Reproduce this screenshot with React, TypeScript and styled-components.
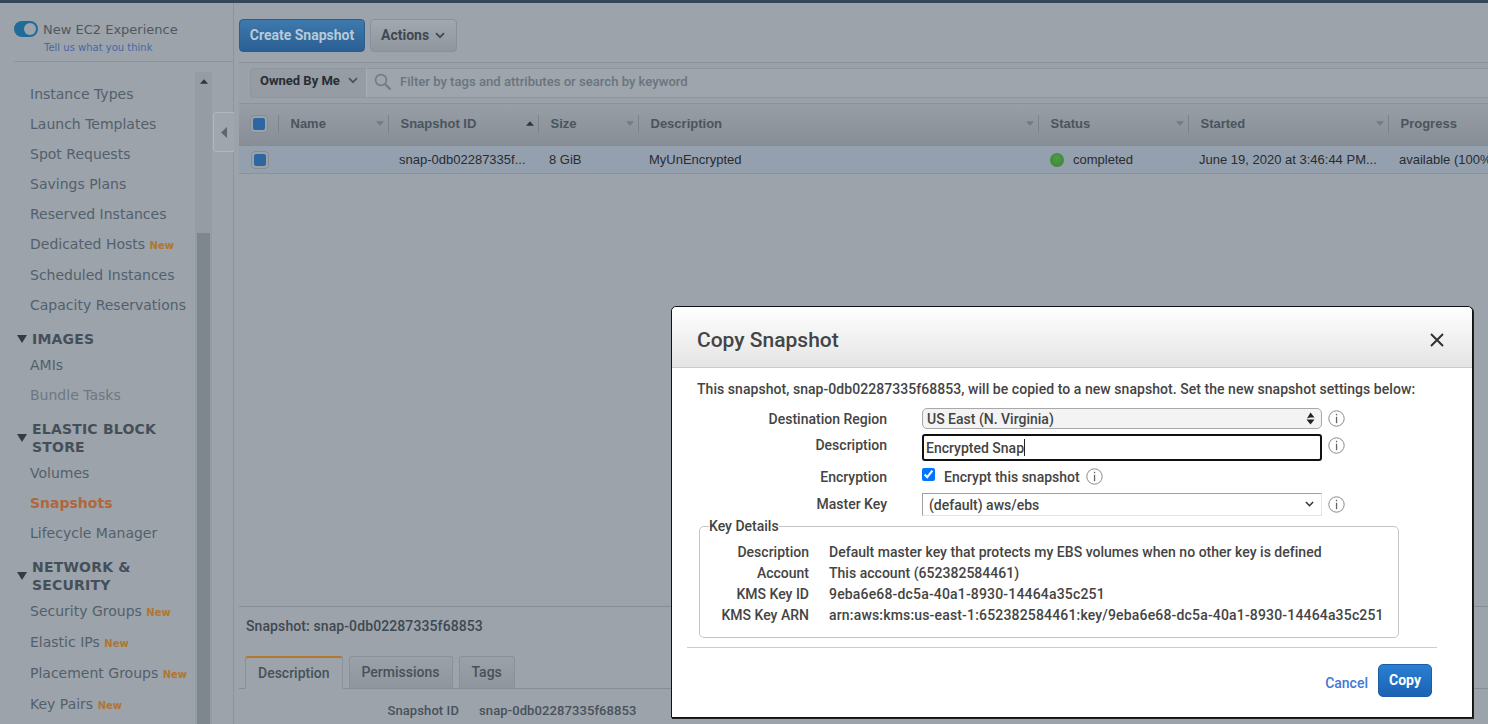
import React from 'react';
import styled, { createGlobalStyle } from 'styled-components';

const GlobalStyle = createGlobalStyle`
    html, body {
        margin: 0;
        padding: 0;
        height: 100%;
        overflow: hidden;
        background: #9ca3aa;
    }
    * {
        box-sizing: border-box;
    }
`;

const Page = styled.div`
    position: relative;
    width: 1488px;
    height: 724px;
    display: flex;
    flex-direction: column;
    overflow: hidden;
    background: #9ca3aa;
`;

const TopBar = styled.div`
    height: 3px;
    flex: none;
    background: #35465a;
`;

const Shell = styled.div`
    flex: 1;
    min-height: 0;
    display: flex;
`;

// #region sidebar
const Sidebar = styled.aside`
    position: relative;
    width: 234px;
    flex: none;
    display: flex;
    flex-direction: column;
    padding-left: 14px;
    border-right: 1px solid #8d949c;
    font-family: 'DejaVu Sans', sans-serif;
`;

const ExperienceBox = styled.div`
    height: 59px;
    flex: none;
    padding-top: 17px;
    border-bottom: 1px solid #8d949c;
`;

const ToggleRow = styled.div`
    display: flex;
    align-items: center;
    gap: 5px;
    font-size: 13px;
    color: #4e5863;
    height: 18px;
`;

const Toggle = styled.span`
    width: 24px;
    height: 16px;
    border-radius: 8px;
    background: #1f6c9b;
    display: flex;
    align-items: center;
    justify-content: flex-end;
    padding-right: 2px;

    &::after {
        content: '';
        width: 12px;
        height: 12px;
        border-radius: 50%;
        background: #9ca3aa;
    }
`;

const FeedbackLink = styled.div`
    margin: 4px 0 0 30px;
    font-size: 10px;
    color: #4a66a6;
`;

const SideBody = styled.div`
    flex: 1;
    min-height: 0;
    display: flex;
    padding-top: 10px;
`;

const Nav = styled.nav`
    width: 181px;
    flex: none;
    padding-top: 7px;
`;

const NavItem = styled.div<{ $tall?: boolean; $muted?: boolean; $active?: boolean }>`
    height: ${(props) => (props.$tall ? '31px' : '30px')};
    display: flex;
    align-items: center;
    padding-left: 16px;
    padding-bottom: ${(props) => (props.$tall ? '1px' : '0')};
    white-space: nowrap;
    font-size: 14px;
    font-weight: ${(props) => (props.$active ? 700 : 400)};
    color: ${(props) => {
        if (props.$active) return '#b0673c';
        return props.$muted ? '#6c7883' : '#53606c';
    }};
`;

const NewBadge = styled.span`
    margin: 2px 0 0 4.5px;
    font-size: 10px;
    font-weight: 700;
    color: #b0762f;
`;

const NavHeading = styled.div`
    display: flex;
    align-items: center;
    margin: 10px 0 2px;
    padding-left: 3px;
`;

const HeadingText = styled.div`
    margin-left: 5px;
    font-size: 14px;
    line-height: 18px;
    font-weight: 700;
    color: #454f5a;
    letter-spacing: 0.2px;
`;

const ScrollTrack = styled.div`
    width: 17px;
    flex: none;
    display: flex;
    flex-direction: column;
    align-items: center;
    background: #959ca3;
`;

const ScrollUp = styled.div`
    height: 161px;
    flex: none;
    display: flex;
    align-items: flex-start;
    padding-top: 7px;
`;

const ScrollThumb = styled.div`
    flex: 1;
    width: 13px;
    background: #7e868e;
`;

const CollapseTab = styled.div`
    position: absolute;
    right: -1px;
    top: 109px;
    width: 21px;
    height: 40px;
    display: flex;
    align-items: center;
    padding-left: 7px;
    background: #9fa6ad;
    border: 1px solid #b0b6bc;
    border-right: none;
    border-radius: 4px 0 0 4px;
`;
// #endregion sidebar

// #region main
const Main = styled.main`
    flex: 1;
    min-width: 0;
    display: flex;
    flex-direction: column;
    padding-left: 5px;
`;

const Toolbar = styled.div`
    height: 59px;
    flex: none;
    display: flex;
    align-items: flex-start;
    gap: 5px;
    padding-top: 16px;
    font-family: Roboto, sans-serif;
`;

const CreateButton = styled.div`
    width: 126px;
    height: 33px;
    padding-bottom: 1px;
    display: flex;
    align-items: center;
    justify-content: center;
    border-radius: 4px;
    border: 1px solid #2b5d8f;
    background: linear-gradient(#3e79ad, #2a5f94);
    color: #b7c9d8;
    font-size: 14px;
    font-weight: 700;
`;

const ActionsButton = styled.div`
    height: 33px;
    padding: 0 11px 1px 10px;
    display: flex;
    align-items: center;
    gap: 6px;
    border-radius: 4px;
    border: 1px solid #8a9199;
    background: linear-gradient(#a2a8af, #8f969e);
    color: #3f4852;
    font-size: 14px;
    font-weight: 700;
`;

const FilterBar = styled.div`
    height: 42px;
    flex: none;
    display: flex;
    align-items: stretch;
    padding: 5px 0 5px 11px;
    background: #9aa1a8;
    border-top: 1px solid #8b9299;
    border-bottom: 1px solid #8b9299;
    font-family: Roboto, sans-serif;
`;

const OwnerPicker = styled.div`
    width: 117px;
    flex: none;
    display: flex;
    align-items: center;
    justify-content: space-between;
    padding: 0 8px 5px 9px;
    border: 1px solid #8f969d;
    border-right: 1px solid #a9afb5;
    border-radius: 4px 0 0 4px;
    background: #959ca3;
    color: #262d35;
    font-size: 13px;
    font-weight: 700;
`;

const FilterField = styled.div`
    flex: 1;
    display: flex;
    align-items: center;
    gap: 8px;
    padding: 0 0 3px 7px;
    background: #9ea5ac;
    border-top: 1px solid #8f969d;
    border-bottom: 1px solid #8f969d;
    color: #6a747e;
    font-size: 13.1px;
    font-weight: 500;
`;

const COLUMNS = '40px 110px 150px 100px 400px 150px 200px 1fr';

const TableHeader = styled.div`
    height: 42px;
    flex: none;
    display: grid;
    grid-template-columns: ${COLUMNS};
    align-items: center;
    padding-bottom: 2px;
    background: linear-gradient(#979ea5, #878e95);
    border-bottom: 1px solid #858c93;
`;

const HeaderCell = styled.div<{ $last?: boolean }>`
    height: 18px;
    display: flex;
    align-items: center;
    justify-content: space-between;
    padding: 0 4px 0 11.5px;
    border-right: ${(props) => (props.$last ? 'none' : '1px solid #7c838b')};
    font-family: 'Liberation Sans', sans-serif;
    font-size: 13px;
    font-weight: 700;
    color: #4b545d;
    white-space: nowrap;
`;

const CheckCell = styled.div<{ $inRow?: boolean }>`
    height: 18px;
    display: flex;
    align-items: center;
    padding-left: ${(props) => (props.$inRow ? '12px' : '11px')};
    border-right: ${(props) => (props.$inRow ? 'none' : '1px solid #7c838b')};
`;

const FakeCheck = styled.span`
    width: 18px;
    height: 18px;
    padding: 2px;
    border-radius: 4px;
    background: #9aa1a8;
    border: 1px solid #858c94;

    &::after {
        content: '';
        display: block;
        width: 100%;
        height: 100%;
        border-radius: 2px;
        background: #2d67a2;
    }
`;

const TableRow = styled.div`
    height: 28px;
    flex: none;
    display: grid;
    grid-template-columns: ${COLUMNS};
    align-items: center;
    background: #95a0ae;
    border-bottom: 1px solid #8a9199;
`;

const RowCell = styled.div`
    padding-left: 10px;
    display: flex;
    align-items: center;
    gap: 9px;
    font-family: 'Liberation Sans', sans-serif;
    font-size: 13px;
    color: #262c33;
    white-space: nowrap;
    overflow: hidden;
`;

const StatusDot = styled.span`
    width: 14px;
    height: 14px;
    margin-left: 1px;
    border-radius: 50%;
    background: radial-gradient(circle at 50% 40%, #4f9c49, #3a8038);
`;

const Spacer = styled.div`
    flex: 1;
`;

const DetailPanel = styled.section`
    height: 118px;
    flex: none;
    border-top: 1px solid #868d94;
    padding: 10px 0 0 7px;
    font-family: Roboto, sans-serif;
`;

const DetailTitle = styled.div`
    font-size: 14px;
    line-height: 19px;
    font-weight: 500;
    letter-spacing: 0.1px;
    color: #3f4852;
`;

const Tabs = styled.div`
    margin: 19px 0 0 -7px;
    height: 34px;
    display: flex;
    align-items: flex-end;
    gap: 6px;
    padding-left: 6px;
    border-bottom: 1px solid #868d94;
`;

const Tab = styled.div<{ $active?: boolean }>`
    height: ${(props) => (props.$active ? '33px' : '32px')};
    padding: 0 12px 1px;
    display: flex;
    align-items: center;
    font-size: 14px;
    font-weight: 500;
    color: #48515b;
    border: 1px solid #8a9199;
    border-radius: 3px 3px 0 0;
    background: ${(props) => (props.$active ? '#9ca3aa' : 'linear-gradient(#9aa1a8, #8e959d)')};
    border-top: ${(props) => (props.$active ? '2px solid #b3782d' : '1px solid #8a9199')};
    border-bottom: ${(props) => (props.$active ? '1px solid #9ca3aa' : 'none')};
    margin-bottom: ${(props) => (props.$active ? '-1px' : '0')};
`;

const DetailRow = styled.div`
    margin-top: 14px;
    display: grid;
    grid-template-columns: 213px 713px 50px;
    column-gap: 20px;
    font-size: 13px;
    font-weight: 500;
    letter-spacing: 0.1px;
    color: #48515b;
`;

const DetailLabel = styled.div`
    text-align: right;
`;

const DashMark = styled.div`
    height: 11px;
    border-bottom: 1px dashed #7f868e;
`;
// #endregion main

// #region dialog
const Dialog = styled.div`
    position: absolute;
    left: 671px;
    top: 306px;
    width: 802px;
    height: 412px;
    display: flex;
    flex-direction: column;
    background: #fff;
    border: 1px solid #111;
    border-radius: 5px 5px 0 0;
    box-shadow: 1px 1px 0 #222;
    font-family: Roboto, sans-serif;
    color: #444;
`;

const DialogHeader = styled.header`
    height: 61px;
    flex: none;
    display: flex;
    align-items: center;
    justify-content: space-between;
    padding: 6px 28px 0 25px;
    border-bottom: 1px solid #ccc;
    border-radius: 5px 5px 0 0;
    background: linear-gradient(#fff, #e4e4e4);
`;

const DialogTitle = styled.h2`
    margin: 0;
    font-size: 21px;
    font-weight: 500;
    color: #444;
`;

const DialogBody = styled.div`
    flex: 1;
    padding: 11px 0 0 25px;
`;

const Intro = styled.div`
    font-size: 14px;
    line-height: 20px;
    font-weight: 500;
    letter-spacing: 0.05px;
    color: #444;
    white-space: nowrap;
`;

const FormRow = styled.div<{ $top: number }>`
    display: grid;
    grid-template-columns: 190px 1fr;
    column-gap: 35px;
    align-items: center;
    margin-top: ${(props) => props.$top}px;
`;

const FormLabel = styled.div<{ $raise?: number }>`
    text-align: right;
    font-size: 14px;
    font-weight: 500;
    color: #444;
    margin-bottom: ${(props) => (props.$raise ?? 0) * 2}px;
`;

const ControlGroup = styled.div`
    display: flex;
    align-items: center;
    gap: 6px;
`;

const InfoSlot = styled.span<{ $raise?: number }>`
    display: flex;
    margin-bottom: ${(props) => (props.$raise ?? 0) * 2}px;
`;

const RegionSelect = styled.div`
    width: 400px;
    height: 21px;
    display: flex;
    align-items: center;
    justify-content: space-between;
    padding: 0 6px 0 4px;
    border: 1px solid #a8a8a8;
    border-radius: 5px;
    background: #f3f3f3;
    font-size: 14px;
    font-weight: 500;
    color: #444;
`;

const TextField = styled.div`
    width: 400px;
    height: 27px;
    display: flex;
    align-items: center;
    padding: 0 2px;
    border: 2px solid #111;
    border-radius: 3px;
    font-size: 14px;
    font-weight: 500;
    color: #444;
`;

const Caret = styled.span`
    width: 1px;
    height: 17px;
    background: #222;
`;

const KeySelect = styled.div`
    width: 400px;
    height: 23px;
    display: flex;
    align-items: center;
    justify-content: space-between;
    padding: 0 7px 0 6px;
    border: 1px solid #e4e4e4;
    border-top-color: #a0a0a0;
    border-left-color: #a0a0a0;
    font-size: 14px;
    font-weight: 500;
    color: #444;
`;

const CheckLabel = styled.label`
    display: flex;
    align-items: center;
    gap: 9px;
    font-size: 14px;
    font-weight: 500;
    color: #444;
`;

const EncryptBox = styled.input`
    width: 13px;
    height: 13px;
    margin: 0 0 4px;
    accent-color: #0075ff;
`;

const KeyFieldset = styled.fieldset`
    margin: 2px 0 0 2px;
    padding: 7px 0 0;
    width: 700px;
    height: 120px;
    border: 1px solid #c4c4c4;
    border-radius: 5px;
`;

const KeyLegend = styled.legend`
    margin-left: 9px;
    padding: 0;
    font-size: 14px;
    font-weight: 500;
    color: #444;
`;

const KeyRow = styled.div<{ $digits?: boolean }>`
    display: grid;
    grid-template-columns: 109px 1fr;
    column-gap: 20px;
    height: 21px;
    align-items: center;
    font-size: 14px;
    font-weight: 500;
    color: #444;
    white-space: nowrap;

    & > div:last-child {
        letter-spacing: ${(props) => (props.$digits ? '0.17px' : '0.02px')};
    }
`;

const KeyName = styled.div`
    text-align: right;
`;

const DialogFooter = styled.footer`
    height: 70px;
    flex: none;
    margin: 0 35px 0 15px;
    border-top: 1px solid #ccc;
    display: flex;
    justify-content: flex-end;
    align-items: flex-start;
    gap: 10px;
    padding: 16px 5px 0 0;
`;

const CancelLink = styled.span`
    margin-top: 11px;
    font-size: 14px;
    font-weight: 500;
    color: #3f78d6;
`;

const CopyButton = styled.div`
    width: 54px;
    height: 33px;
    display: flex;
    align-items: center;
    justify-content: center;
    padding-bottom: 2px;
    border: 1px solid #1a5da8;
    border-radius: 5px;
    background: linear-gradient(#2b7fd2, #1a62b4);
    color: #fff;
    font-size: 14px;
    font-weight: 700;
`;
// #endregion dialog

// #region icons
const Chevron = ({ color = '#3f4852', size = 10 }: { color?: string; size?: number }) => (
    <svg width={size} height={size * 0.7} viewBox="0 0 10 7">
        <path d="M1 1.2 L5 5.2 L9 1.2" fill="none" stroke={color} strokeWidth="1.7" />
    </svg>
);

const SortCaret = ({ up }: { up?: boolean }) => (
    <svg width="8" height="5" viewBox="0 0 9 5">
        <path d={up ? 'M4.5 0 L9 5 L0 5 Z' : 'M0 0 L9 0 L4.5 5 Z'} fill={up ? '#2f363d' : '#737a82'} />
    </svg>
);

const DownTriangle = () => (
    <svg width="10" height="8" viewBox="0 0 10 8" style={{ flex: 'none' }}>
        <path d="M0 0 L10 0 L5 8 Z" fill="#333b44" />
    </svg>
);

const InfoIcon = () => (
    <svg width="17" height="17" viewBox="0 0 17 17" style={{ flex: 'none' }}>
        <circle cx="8.5" cy="8.5" r="7.7" fill="none" stroke="#8a8a8a" strokeWidth="1" />
        <rect x="7.9" y="3.8" width="1.3" height="1.5" fill="#666" />
        <rect x="7.9" y="6.8" width="1.3" height="6.4" fill="#666" />
    </svg>
);

const SearchIcon = () => (
    <svg width="18" height="18" viewBox="0 0 18 18" style={{ flex: 'none' }}>
        <circle cx="7" cy="7" r="5.4" fill="none" stroke="#737c85" strokeWidth="1.6" />
        <path d="M11 11 L16.5 16.5" stroke="#737c85" strokeWidth="2.4" />
    </svg>
);

const SelectArrows = () => (
    <svg width="9" height="14" viewBox="0 0 9 14">
        <path d="M4.5 0.5 L8.5 5.5 L4 5.5 L1 6.5 Z" fill="#222" />
        <path d="M0.5 7.5 L8.5 7.5 L4.5 12.5 Z" fill="#222" />
    </svg>
);

const CloseIcon = () => (
    <svg width="14" height="14" viewBox="0 0 14 14">
        <path d="M1 1 L13 13 M13 1 L1 13" stroke="#333" strokeWidth="2" />
    </svg>
);
// #endregion icons

const NAV_GROUPS = [
    {
        items: [
            { label: 'Instance Types' },
            { label: 'Launch Templates' },
            { label: 'Spot Requests' },
            { label: 'Savings Plans' },
            { label: 'Reserved Instances' },
            { label: 'Dedicated Hosts', badge: true, tall: true },
            { label: 'Scheduled Instances' },
            { label: 'Capacity Reservations' },
        ],
    },
    {
        heading: 'IMAGES',
        items: [{ label: 'AMIs' }, { label: 'Bundle Tasks', muted: true }],
    },
    {
        heading: 'ELASTIC BLOCK STORE',
        items: [{ label: 'Volumes' }, { label: 'Snapshots', active: true }, { label: 'Lifecycle Manager' }],
    },
    {
        heading: 'NETWORK & SECURITY',
        items: [
            { label: 'Security Groups', badge: true, tall: true },
            { label: 'Elastic IPs', badge: true, tall: true },
            { label: 'Placement Groups', badge: true, tall: true },
            { label: 'Key Pairs', badge: true, tall: true },
        ],
    },
];

const HEADERS = ['Name', 'Snapshot ID', 'Size', 'Description', 'Status', 'Started', 'Progress'];

const KEY_DETAILS = [
    ['Description', 'Default master key that protects my EBS volumes when no other key is defined'],
    ['Account', 'This account (652382584461)'],
    ['KMS Key ID', '9eba6e68-dc5a-40a1-8930-14464a35c251'],
    ['KMS Key ARN', 'arn:aws:kms:us-east-1:652382584461:key/9eba6e68-dc5a-40a1-8930-14464a35c251'],
];

const App = () => (
    <Page>
        <GlobalStyle />
        <TopBar />
        <Shell>
            <Sidebar>
                <ExperienceBox>
                    <ToggleRow>
                        <Toggle />
                        New EC2 Experience
                    </ToggleRow>
                    <FeedbackLink>Tell us what you think</FeedbackLink>
                </ExperienceBox>
                <SideBody>
                    <Nav>
                        {NAV_GROUPS.map((group, index) => (
                            <div key={index}>
                                {group.heading && (
                                    <NavHeading>
                                        <DownTriangle />
                                        <HeadingText>{group.heading}</HeadingText>
                                    </NavHeading>
                                )}
                                {group.items.map((item: any) => (
                                    <NavItem
                                        key={item.label}
                                        $tall={item.tall}
                                        $muted={item.muted}
                                        $active={item.active}
                                    >
                                        {item.label}
                                        {item.badge && <NewBadge>New</NewBadge>}
                                    </NavItem>
                                ))}
                            </div>
                        ))}
                    </Nav>
                    <ScrollTrack>
                        <ScrollUp>
                            <SortCaret up />
                        </ScrollUp>
                        <ScrollThumb />
                    </ScrollTrack>
                </SideBody>
                <CollapseTab>
                    <svg width="6" height="11" viewBox="0 0 6 11">
                        <path d="M6 0 L6 11 L0 5.5 Z" fill="#5d666f" />
                    </svg>
                </CollapseTab>
            </Sidebar>
            <Main>
                <Toolbar>
                    <CreateButton>Create Snapshot</CreateButton>
                    <ActionsButton>
                        Actions
                        <Chevron />
                    </ActionsButton>
                </Toolbar>
                <FilterBar>
                    <OwnerPicker>
                        Owned By Me
                        <Chevron color="#4b545d" />
                    </OwnerPicker>
                    <FilterField>
                        <SearchIcon />
                        Filter by tags and attributes or search by keyword
                    </FilterField>
                </FilterBar>
                <TableHeader>
                    <CheckCell>
                        <FakeCheck />
                    </CheckCell>
                    {HEADERS.map((header) => (
                        <HeaderCell key={header} $last={header === 'Progress'}>
                            {header}
                            {header !== 'Progress' && <SortCaret up={header === 'Snapshot ID'} />}
                        </HeaderCell>
                    ))}
                </TableHeader>
                <TableRow>
                    <CheckCell $inRow>
                        <FakeCheck />
                    </CheckCell>
                    <RowCell />
                    <RowCell>snap-0db02287335f...</RowCell>
                    <RowCell>8 GiB</RowCell>
                    <RowCell>MyUnEncrypted</RowCell>
                    <RowCell>
                        <StatusDot />
                        completed
                    </RowCell>
                    <RowCell>June 19, 2020 at 3:46:44 PM...</RowCell>
                    <RowCell>available (100%)</RowCell>
                </TableRow>
                <Spacer />
                <DetailPanel>
                    <DetailTitle>Snapshot: snap-0db02287335f68853</DetailTitle>
                    <Tabs>
                        <Tab $active>Description</Tab>
                        <Tab>Permissions</Tab>
                        <Tab>Tags</Tab>
                    </Tabs>
                    <DetailRow>
                        <DetailLabel>Snapshot ID</DetailLabel>
                        <div>snap-0db02287335f68853</div>
                        <DashMark />
                    </DetailRow>
                </DetailPanel>
            </Main>
        </Shell>
        <Dialog>
            <DialogHeader>
                <DialogTitle>Copy Snapshot</DialogTitle>
                <CloseIcon />
            </DialogHeader>
            <DialogBody>
                <Intro>
                    This snapshot, snap-0db02287335f68853, will be copied to a new snapshot. Set the new snapshot
                    settings below:
                </Intro>
                <FormRow $top={9}>
                    <FormLabel>Destination Region</FormLabel>
                    <ControlGroup>
                        <RegionSelect>
                            US East (N. Virginia)
                            <SelectArrows />
                        </RegionSelect>
                        <InfoIcon />
                    </ControlGroup>
                </FormRow>
                <FormRow $top={5}>
                    <FormLabel $raise={3}>Description</FormLabel>
                    <ControlGroup>
                        <TextField>
                            Encrypted Snap
                            <Caret />
                        </TextField>
                        <InfoSlot $raise={2}>
                            <InfoIcon />
                        </InfoSlot>
                    </ControlGroup>
                </FormRow>
                <FormRow $top={7}>
                    <FormLabel>Encryption</FormLabel>
                    <ControlGroup>
                        <CheckLabel>
                            <EncryptBox type="checkbox" checked readOnly />
                            Encrypt this snapshot
                        </CheckLabel>
                        <InfoIcon />
                    </ControlGroup>
                </FormRow>
                <FormRow $top={8}>
                    <FormLabel $raise={1}>Master Key</FormLabel>
                    <ControlGroup>
                        <KeySelect>
                            (default) aws/ebs
                            <Chevron color="#333" size={9} />
                        </KeySelect>
                        <InfoIcon />
                    </ControlGroup>
                </FormRow>
                <KeyFieldset>
                    <KeyLegend>Key Details</KeyLegend>
                    {KEY_DETAILS.map(([name, value]) => (
                        <KeyRow key={name} $digits={name.startsWith('KMS')}>
                            <KeyName>{name}</KeyName>
                            <div>{value}</div>
                        </KeyRow>
                    ))}
                </KeyFieldset>
            </DialogBody>
            <DialogFooter>
                <CancelLink>Cancel</CancelLink>
                <CopyButton>Copy</CopyButton>
            </DialogFooter>
        </Dialog>
    </Page>
);

export default App;
